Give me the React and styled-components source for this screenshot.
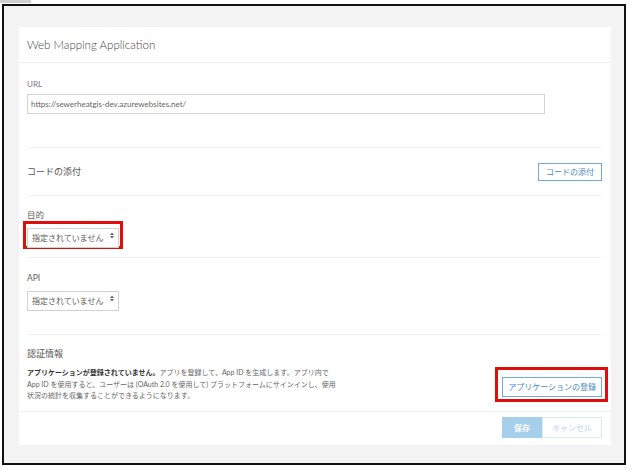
import React from 'react';
import styled, { createGlobalStyle } from 'styled-components';

const GlobalStyle = createGlobalStyle`
  html, body {
    margin: 0;
    padding: 0;
    background: #ffffff;
  }
  body {
    font-family: "Lato", "Noto Sans CJK JP", sans-serif;
    color: #4c4c4c;
  }
`;

const TopStrip = styled.div`
  width: 31px;
  height: 3px;
  background: #cfcfcf;
`;

const Frame = styled.div`
  box-sizing: border-box;
  width: 624px;
  height: 461px;
  margin: 1px 0 0 2px;
  border: 2px solid #111111;
  background: #f3f3f3;
  padding: 21px 13px 17px 15px;
`;

const Card = styled.div`
  background: #ffffff;
  display: flex;
  flex-direction: column;
`;

const CardHeader = styled.div`
  height: 35px;
  display: flex;
  align-items: center;
  padding: 0 8px;
  border-bottom: 1px solid #efefef;
  font-size: 11.5px;
  font-weight: 300;
  color: #444444;
`;

const CardBody = styled.div`
  padding: 0 9px 0 8px;
`;

const Section = styled.div`
  padding: ${(p) => p.$pt || 0}px 0 ${(p) => p.$pb || 0}px;
  border-bottom: ${(p) => (p.$last ? 'none' : '1px solid #f0f0f0')};
`;

const InlineSection = styled(Section)`
  height: 47px;
  display: flex;
  align-items: center;
  justify-content: space-between;
`;

const Label = styled.div`
  font-size: ${(p) => p.$size || 8.5}px;
  line-height: ${(p) => p.$lh || 12}px;
  color: ${(p) => p.$color || '#5e5e5e'};
`;

const Title = styled.div`
  font-size: 9px;
  line-height: 14px;
  color: #555555;
`;

const TextInput = styled.input`
  box-sizing: border-box;
  display: block;
  width: 518px;
  height: 20px;
  margin-top: 5px;
  padding: 0 3px;
  border: 1px solid #d2d2d2;
  font-family: inherit;
  font-size: 8px;
  color: #666666;
  outline: none;
`;

const SelectWrap = styled.div`
  position: relative;
  width: 92px;
  height: 20px;
  margin-top: ${(p) => (p.$flush ? 0 : 4)}px;
`;

const Select = styled.select`
  box-sizing: border-box;
  width: 100%;
  height: 100%;
  appearance: none;
  -webkit-appearance: none;
  border: 1px solid #d2d2d2;
  background: #ffffff;
  padding: 0 12px 0 4px;
  font-family: inherit;
  font-size: 8px;
  color: #5a5a5a;
  outline: none;
`;

const Arrows = styled.svg`
  position: absolute;
  right: 5px;
  top: 7px;
  pointer-events: none;
`;

const Highlight = styled.div`
  display: inline-block;
  border: 3px solid #e00d0d;
  padding: ${(p) => p.$pad};
  margin: ${(p) => p.$margin};
`;

const OutlineButton = styled.button`
  box-sizing: border-box;
  height: ${(p) => p.$h || 18}px;
  padding: 0 ${(p) => p.$px || 7}px;
  border: 1px solid #72a9d8;
  background: #ffffff;
  color: #4a8bc6;
  font-family: inherit;
  font-size: 8px;
  white-space: nowrap;
  cursor: pointer;
`;

const AuthRow = styled.div`
  display: flex;
  align-items: center;
  justify-content: space-between;
  margin-top: 6px;
`;

const Description = styled.p`
  margin: 0;
  font-size: 7px;
  line-height: 11.5px;
  color: #666666;
  b {
    color: #333333;
    font-weight: 700;
  }
`;

const Footer = styled.div`
  display: flex;
  justify-content: flex-end;
  padding: 5px 9px 7px 0;
  border-top: 1px solid #efefef;
`;

const FooterButton = styled.button`
  box-sizing: border-box;
  height: 21px;
  padding: 0 ${(p) => (p.$primary ? 11 : 9)}px;
  border: 1px solid ${(p) => (p.$primary ? '#a6cfeb' : '#d9e9f5')};
  background: ${(p) => (p.$primary ? '#a6cfeb' : '#ffffff')};
  color: ${(p) => (p.$primary ? '#ffffff' : '#b9d7ee')};
  font-family: inherit;
  font-size: 8px;
  font-weight: ${(p) => (p.$primary ? 700 : 400)};
`;

const UpDown = () => (
  <Arrows width="4" height="7" viewBox="0 0 4 7">
    <path d="M0 3 L2 0.5 L4 3 Z M0 4 L2 6.5 L4 4 Z" fill="#666" />
  </Arrows>
);

const NotSpecified = ({ flush }) => (
  <SelectWrap $flush={flush}>
    <Select defaultValue="none">
      <option value="none">指定されていません</option>
    </Select>
    <UpDown />
  </SelectWrap>
);

export default function App() {
  return (
    <>
      <GlobalStyle />
      <TopStrip />
      <Frame>
        <Card>
          <CardHeader>Web Mapping Application</CardHeader>
          <CardBody>
            <Section $pt={16} $pb={33}>
              <Label $size={8} $lh={10} $color="#777777">URL</Label>
              <TextInput readOnly value="https://sewerheatgis-dev.azurewebsites.net/" />
            </Section>

            <InlineSection>
              <Title>コードの添付</Title>
              <OutlineButton>コードの添付</OutlineButton>
            </InlineSection>

            <Section $pt={13} $pb={12}>
              <Label>目的</Label>
              <Highlight $pad="1px" $margin="0 0 -4px -4px">
                <NotSpecified flush />
              </Highlight>
            </Section>

            <Section $pt={14} $pb={26}>
              <Label>API</Label>
              <NotSpecified />
            </Section>

            <Section $pt={12} $pb={9} $last>
              <Title>認証情報</Title>
              <AuthRow>
                <Description>
                  <b>アプリケーションが登録されていません。</b>アプリを登録して、App ID を生成します。アプリ内で
                  <br />
                  App ID を使用すると、ユーザーは (OAuth 2.0 を使用して) プラットフォームにサインインし、使用
                  <br />
                  状況の統計を収集することができるようになります。
                </Description>
                <Highlight $pad="4px 3px 2px 4px" $margin="0 -6px 0 0">
                  <OutlineButton $h={20} $px={5}>アプリケーションの登録</OutlineButton>
                </Highlight>
              </AuthRow>
            </Section>
          </CardBody>
          <Footer>
            <FooterButton $primary>保存</FooterButton>
            <FooterButton>キャンセル</FooterButton>
          </Footer>
        </Card>
      </Frame>
    </>
  );
}
